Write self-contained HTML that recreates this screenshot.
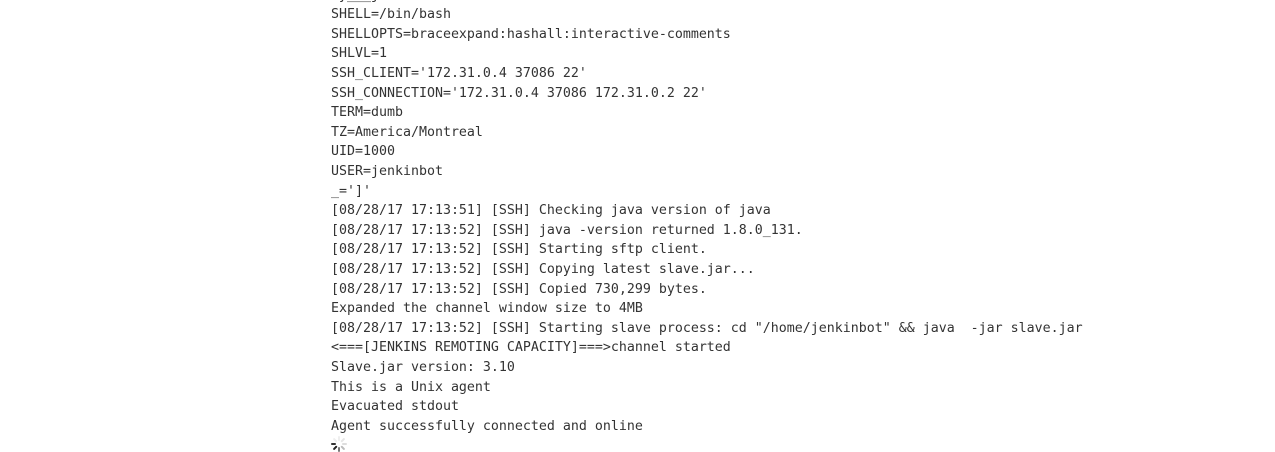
<!DOCTYPE html>
<html><head><meta charset="utf-8"><style>
html,body{margin:0;padding:0;background:#fff;width:1275px;height:451px;overflow:hidden}
pre{position:absolute;left:331px;top:-14.3px;margin:0;font-family:"DejaVu Sans Mono","Liberation Mono",monospace;font-size:13.29px;line-height:19.6px;color:#333}
svg{position:absolute;left:331px;top:436px}
</style></head><body>
<pre>Oy___jenkinbot
SHELL=/bin/bash
SHELLOPTS=braceexpand:hashall:interactive-comments
SHLVL=1
SSH_CLIENT='172.31.0.4 37086 22'
SSH_CONNECTION='172.31.0.4 37086 172.31.0.2 22'
TERM=dumb
TZ=America/Montreal
UID=1000
USER=jenkinbot
_=']'
[08/28/17 17:13:51] [SSH] Checking java version of java
[08/28/17 17:13:52] [SSH] java -version returned 1.8.0_131.
[08/28/17 17:13:52] [SSH] Starting sftp client.
[08/28/17 17:13:52] [SSH] Copying latest slave.jar...
[08/28/17 17:13:52] [SSH] Copied 730,299 bytes.
Expanded the channel window size to 4MB
[08/28/17 17:13:52] [SSH] Starting slave process: cd "/home/jenkinbot" &amp;&amp; java  -jar slave.jar
&lt;===[JENKINS REMOTING CAPACITY]===&gt;channel started
Slave.jar version: 3.10
This is a Unix agent
Evacuated stdout
Agent successfully connected and online</pre>
<svg width="16" height="16" viewBox="0 0 16 16">
<g stroke-width="2" stroke-linecap="round">
<line x1="8" y1="1" x2="8" y2="4" stroke="#eee"/>
<line x1="12.9" y1="3.1" x2="10.8" y2="5.2" stroke="#e6e6e6"/>
<line x1="15" y1="8" x2="12" y2="8" stroke="#ddd"/>
<line x1="12.9" y1="12.9" x2="10.8" y2="10.8" stroke="#bbb"/>
<line x1="8" y1="15" x2="8" y2="12" stroke="#777"/>
<line x1="3.1" y1="12.9" x2="5.2" y2="10.8" stroke="#222"/>
<line x1="1" y1="8" x2="4" y2="8" stroke="#333"/>
<line x1="3.1" y1="3.1" x2="5.2" y2="5.2" stroke="#eee"/>
</g></svg>
</body></html>
